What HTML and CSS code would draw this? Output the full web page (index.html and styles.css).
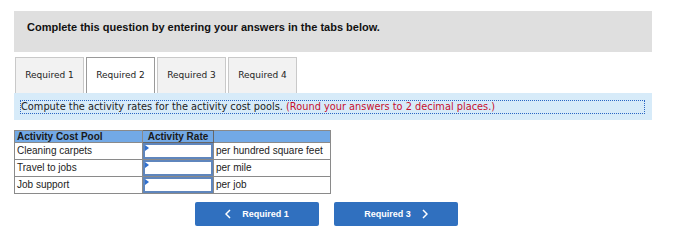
FILE: index.html
```html
<!DOCTYPE html>
<html>
<head>
<meta charset="utf-8">
<link rel="stylesheet" href="styles.css">
</head>
<body>
<div class="page">
  <div class="banner">Complete this question by entering your answers in the tabs below.</div>
  <div class="tabs">
    <div class="tab">Required 1</div>
    <div class="tab active">Required 2</div>
    <div class="tab">Required 3</div>
    <div class="tab">Required 4</div>
  </div>
  <div class="instr">
    <div class="instr-inner">Compute the activity rates for the activity cost pools. <span class="red">(Round your answers to 2 decimal places.)</span></div>
  </div>
  <table class="grid">
    <tr class="head">
      <th class="c1">Activity Cost Pool</th>
      <th class="c2">Activity Rate</th>
      <th class="c3"></th>
    </tr>
    <tr>
      <td>Cleaning carpets</td>
      <td class="in"><div class="box"><span class="flag"></span></div></td>
      <td>per hundred square feet</td>
    </tr>
    <tr>
      <td>Travel to jobs</td>
      <td class="in"><div class="box"><span class="flag"></span></div></td>
      <td>per mile</td>
    </tr>
    <tr>
      <td>Job support</td>
      <td class="in"><div class="box"><span class="flag"></span></div></td>
      <td>per job</td>
    </tr>
  </table>
  <div class="nav">
    <div class="btn"><svg width="6" height="10" viewBox="0 0 6 10"><polyline points="5,1 1,5 5,9" fill="none" stroke="#fff" stroke-width="1.5"/></svg><span>Required 1</span></div>
    <div class="btn"><span>Required 3</span><svg width="6" height="10" viewBox="0 0 6 10"><polyline points="1,1 5,5 1,9" fill="none" stroke="#fff" stroke-width="1.5"/></svg></div>
  </div>
</div>
</body>
</html>
```

FILE: styles.css
```css
html, body {
  margin: 0;
  padding: 0;
  background: #fff;
}
.page {
  padding: 11px 0 0 14px;
  width: 638px;
}
.banner {
  background: #dfdfdf;
  height: 41px;
  box-sizing: border-box;
  padding: 10px 13px 0 13px;
  font-family: "Liberation Sans", Arial, sans-serif;
  font-weight: bold;
  font-size: 11px;
  line-height: 13px;
  color: #111;
}
.tabs {
  display: flex;
  gap: 2px;
  margin-top: 5px;
  padding-left: 1px;
}
.tab {
  width: 69px;
  height: 36px;
  box-sizing: border-box;
  border: 1px solid #c9c9c9;
  border-bottom: none;
  background: #f2f2f2;
  font-family: "DejaVu Sans", Verdana, sans-serif;
  font-size: 9px;
  color: #222;
  display: flex;
  align-items: center;
  justify-content: center;
  padding-bottom: 2px;
}
.tab.active {
  background: #fff;
  border-color: #9a9a9a;
}
.instr {
  background: #d7ebf9;
  height: 27px;
  box-sizing: border-box;
  padding: 7px 7px 6px 6px;
}
.instr-inner {
  border: 1px dotted #2a66c4;
  height: 14px;
  box-sizing: border-box;
  font-family: "DejaVu Sans", Verdana, sans-serif;
  font-size: 9.8px;
  line-height: 12px;
  color: #222;
  white-space: nowrap;
}
.red {
  color: #c8102e;
}
.grid {
  margin-top: 10px;
  border-collapse: collapse;
  font-family: "Liberation Sans", Arial, sans-serif;
  font-size: 10px;
  color: #222;
}
.grid th, .grid td {
  border: 1px solid #8a8a8a;
  padding: 0 2px;
  text-align: left;
  white-space: nowrap;
}
.grid th {
  background: #72a9e6;
  font-weight: bold;
  height: 11px;
  line-height: 11px;
  color: #1a1a1a;
}
.grid th.c2 {
  border-color: #666;
  text-align: center;
}
.grid td {
  height: 16px;
  line-height: 14px;
}
.c1 { width: 123px; }
.c2 { width: 66px; }
.c3 { width: 112px; }
.grid td.in {
  padding: 0;
}
.box {
  position: relative;
  height: 16px;
  box-sizing: border-box;
  border: 2px solid #5f86bd;
  background: #fff;
}
.flag {
  position: absolute;
  left: 0;
  top: 0;
  width: 0;
  height: 0;
  border-top: 3px solid transparent;
  border-bottom: 3px solid transparent;
  border-left: 4px solid #2f6fcf;
}
.nav {
  display: flex;
  gap: 15px;
  margin-top: 8px;
  padding-left: 181px;
}
.btn {
  width: 124px;
  height: 24px;
  background: #3070bf;
  border-radius: 2px;
  display: flex;
  align-items: center;
  justify-content: center;
  gap: 11px;
  font-family: "Liberation Sans", Arial, sans-serif;
  font-weight: bold;
  font-size: 9px;
  color: #fff;
}
```
